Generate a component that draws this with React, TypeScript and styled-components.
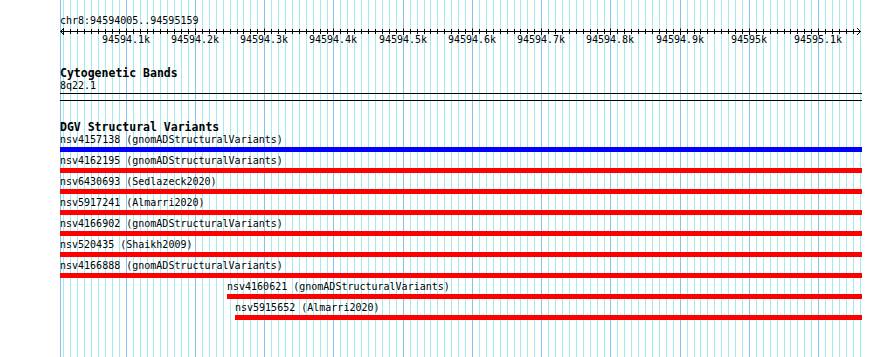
import styled, { createGlobalStyle } from "styled-components";

const START = 94594005;
const END = 94595159;
const SCALE = 0.6924;
const TRACK_WIDTH = 802;

const toX = (bp: number) => 0.5 + (bp - START) * SCALE;

type Variant = {
  id: string;
  source: string;
  start: number;
  type: "gain" | "loss";
};

const variants: Variant[] = [
  { id: "nsv4157138", source: "gnomADStructuralVariants", start: START, type: "gain" },
  { id: "nsv4162195", source: "gnomADStructuralVariants", start: START, type: "loss" },
  { id: "nsv6430693", source: "Sedlazeck2020", start: START, type: "loss" },
  { id: "nsv5917241", source: "Almarri2020", start: START, type: "loss" },
  { id: "nsv4166902", source: "gnomADStructuralVariants", start: START, type: "loss" },
  { id: "nsv520435", source: "Shaikh2009", start: START, type: "loss" },
  { id: "nsv4166888", source: "gnomADStructuralVariants", start: START, type: "loss" },
  { id: "nsv4160621", source: "gnomADStructuralVariants", start: 94594246, type: "loss" },
  { id: "nsv5915652", source: "Almarri2020", start: 94594258, type: "loss" },
];

const gridStops: number[] = [];
for (let bp = Math.ceil(START / 10) * 10; bp <= END; bp += 10) gridStops.push(bp);

const majorStops = gridStops.filter((bp) => bp % 100 === 0);

const tickLabel = (bp: number) => {
  const k = bp / 1000;
  return `${Number.isInteger(k) ? k : k.toFixed(1)}k`;
};

const GlobalStyle = createGlobalStyle`
  body {
    margin: 0;
    background: #ffffff;
    color: #000000;
    font-family: "DejaVu Sans Mono", "Liberation Mono", monospace;
  }
`;

const Page = styled.div`
  position: relative;
  box-sizing: border-box;
  width: 890px;
  min-height: 357px;
  padding-left: 60px;
  overflow: hidden;
`;

// gridlines sit behind every track
const Grid = styled.svg`
  position: absolute;
  left: 60px;
  top: 0;
`;

const Tracks = styled.div`
  position: relative;
  width: ${TRACK_WIDTH}px;
`;

const LocationLabel = styled.div`
  padding-top: 15px;
  font-size: 10px;
  line-height: 12px;
`;

const Scale = styled.svg`
  display: block;
  font-family: "DejaVu Sans Mono", "Liberation Mono", monospace;
  font-size: 10px;
`;

const TrackTitle = styled.div`
  margin-top: 20px;
  font-size: 11.5px;
  font-weight: bold;
  line-height: 13px;
`;

const BandLabel = styled.div`
  font-size: 10px;
  line-height: 12px;
`;

const BandLines = styled.div`
  margin-top: 1px;
  height: 6px;
  border-top: 1px solid #000;
  border-bottom: 1px solid #000;
`;

const FeatureRow = styled.div`
  padding-bottom: 3px;
`;

const FeatureLabel = styled.div`
  font-size: 10px;
  line-height: 12px;
  white-space: nowrap;
`;

const FeatureBar = styled.div<{ $type: "gain" | "loss" }>`
  margin-top: 1px;
  height: 5px;
  background: ${(p) => (p.$type === "gain" ? "#0000ff" : "#ff0000")};
`;

const App = () => {
  return (
    <Page>
      <GlobalStyle />
      <Grid width={TRACK_WIDTH} height={357}>
        {gridStops.map((bp) => (
          <line
            key={bp}
            x1={Math.floor(toX(bp)) + 0.5}
            x2={Math.floor(toX(bp)) + 0.5}
            y1={0}
            y2={357}
            stroke={bp % 100 === 0 ? "#86c2ee" : "#a4eaee"}
          />
        ))}
        <line x1={0.5} x2={0.5} y1={0} y2={357} stroke="#86c2ee" />
        <line x1={800.5} x2={800.5} y1={0} y2={357} stroke="#a4eaee" />
      </Grid>
      <Tracks>
        <LocationLabel>chr8:94594005..94595159</LocationLabel>
        <Scale width={TRACK_WIDTH} height={20}>
          <line x1={0.5} x2={800.5} y1={4.5} y2={4.5} stroke="#000" />
          <polyline points="4,1 0.5,4.5 4,8" fill="none" stroke="#000" />
          <polyline points="797,1 800.5,4.5 797,8" fill="none" stroke="#000" />
          {gridStops.map((bp) => {
            const x = Math.floor(toX(bp)) + 0.5;
            const major = bp % 100 === 0;
            return (
              <line key={bp} x1={x} x2={x} y1={major ? 1.5 : 2} y2={major ? 8 : 7} stroke="#000" />
            );
          })}
          {majorStops.map((bp) => (
            <text key={bp} x={Math.floor(toX(bp))} y={16} textAnchor="middle" fill="#000">
              {tickLabel(bp)}
            </text>
          ))}
        </Scale>

        <TrackTitle>Cytogenetic Bands</TrackTitle>
        <BandLabel>8q22.1</BandLabel>
        <BandLines />

        <TrackTitle>DGV Structural Variants</TrackTitle>
        {variants.map((v) => (
          <FeatureRow key={v.id} style={{ marginLeft: Math.round(toX(v.start) - 0.5) }}>
            <FeatureLabel>
              {v.id} ({v.source})
            </FeatureLabel>
            <FeatureBar $type={v.type} />
          </FeatureRow>
        ))}
      </Tracks>
    </Page>
  );
};

export default App;
